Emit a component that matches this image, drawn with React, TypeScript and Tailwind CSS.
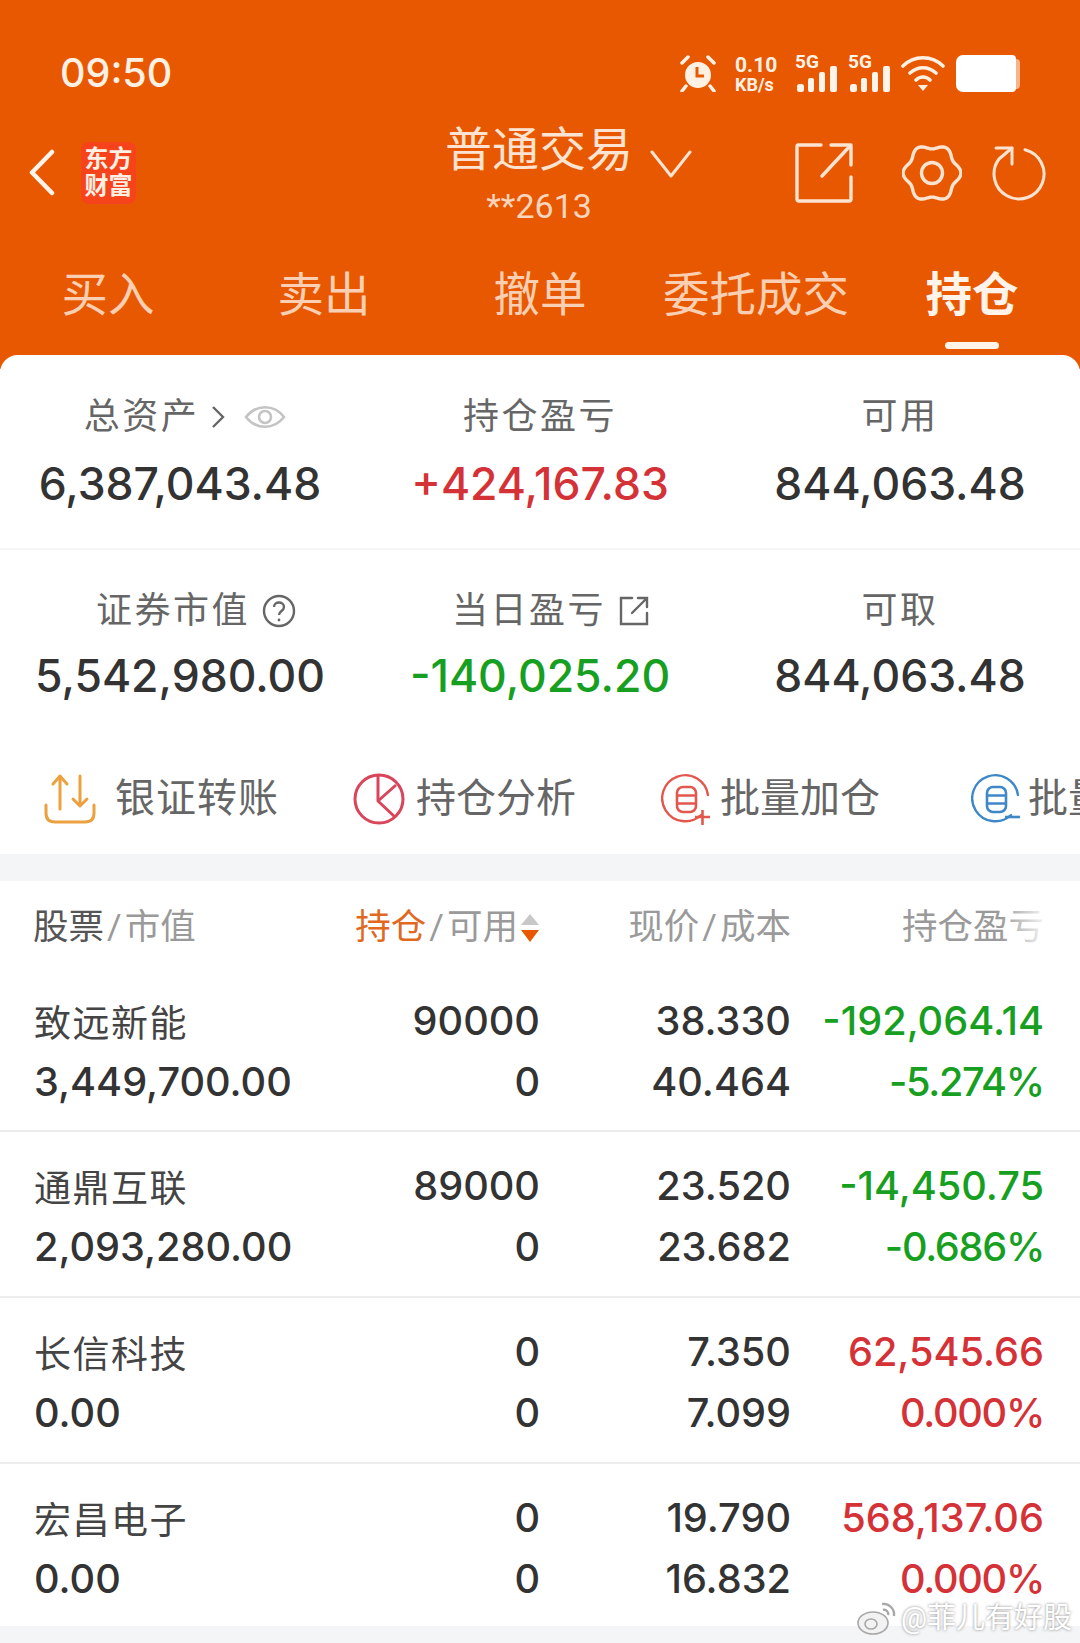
import React from "react";

const RED = "text-[#d53238]";
const GREEN = "text-[#179f22]";

function gearPath() {
  const pts: string[] = [];
  for (let i = 0; i <= 240; i++) {
    const t = (i / 240) * Math.PI * 2;
    const r = 26.5 - 2.4 * Math.cos(6 * t);
    pts.push(`${(30 + r * Math.sin(t)).toFixed(2)} ${(30 - r * Math.cos(t)).toFixed(2)}`);
  }
  return "M" + pts.join("L") + "Z";
}

function Signal() {
  return (
    <div className="relative w-[42px] h-[37px] shrink-0">
      <span className="absolute left-0 top-[-3px] text-[19px] leading-[20px] font-bold text-[#fff3ea]">5G</span>
      <svg viewBox="0 0 42 37" className="absolute inset-0 w-[42px] h-[37px]">
        <rect x="2" y="29" width="7" height="8" rx="2.5" fill="#fff3ea" />
        <rect x="13" y="23" width="6" height="14" rx="2" fill="#fff3ea" />
        <rect x="24" y="17" width="6" height="20" rx="2" fill="#fff3ea" />
        <rect x="35" y="11" width="7" height="26" rx="2" fill="#fff3ea" />
      </svg>
    </div>
  );
}

function DbIcon({ color, sign }: { color: string; sign: "+" | "-" }) {
  return (
    <svg viewBox="0 0 50 52" className="w-[50px] h-[52px] shrink-0" fill="none">
      <path d="M40 42 A23 23 0 1 1 47 22" stroke={color} strokeWidth="2.4" strokeLinecap="round" />
      <g stroke={color} strokeWidth="2.6">
        <rect x="16" y="14" width="19" height="25" rx="6" />
        <path d="M16 22.5h19M16 30.5h19" />
      </g>
      {sign === "+" ? (
        <path d="M34 44h15M41.5 37v15" stroke={color} strokeWidth="2.6" />
      ) : (
        <path d="M34 44h15" stroke={color} strokeWidth="2.6" />
      )}
    </svg>
  );
}

function Stat({ label, value, color, extra, labelCls, valueCls }: { label: string; value: string; color?: string; extra?: React.ReactNode; labelCls: string; valueCls: string }) {
  return (
    <div className="relative flex flex-col items-center">
      <div className={`h-[50px] flex items-center text-[36px] text-[#666] tracking-[2.5px] ${labelCls}`}>
        {label}
        {extra}
      </div>
      <div className={`h-[70px] flex items-center font-['Inter'] text-[44.5px] font-medium ${valueCls} ${color ?? "text-[#333]"}`}>{value}</div>
    </div>
  );
}

const rows = [
  { n: "致远新能", v: "3,449,700.00", a: "90000", b: "0", c: "38.330", d: "40.464", e: "-192,064.14", f: "-5.274%", col: GREEN },
  { n: "通鼎互联", v: "2,093,280.00", a: "89000", b: "0", c: "23.520", d: "23.682", e: "-14,450.75", f: "-0.686%", col: GREEN },
  { n: "长信科技", v: "0.00", a: "0", b: "0", c: "7.350", d: "7.099", e: "62,545.66", f: "0.000%", col: RED },
  { n: "宏昌电子", v: "0.00", a: "0", b: "0", c: "19.790", d: "16.832", e: "568,137.06", f: "0.000%", col: RED },
];

const rowBox = ["h-[159px] pt-[18px] border-b-2", "h-[166px] pt-[24px] border-b-2", "h-[166px] pt-[24px] border-b-2", "h-[162px] pt-[24px]"];

export default function App() {
  return (
    <div className="relative w-[1080px] h-[1643px] overflow-hidden bg-[#f4f5f7] font-['Roboto','Noto_Sans_CJK_SC',sans-serif]">
      {/* Orange header */}
      <div className="h-[369px] bg-[#e85800] text-white">
        {/* status bar */}
        <div className="h-[120px] flex items-center pt-[27px]">
          <div className="ml-[60px] w-[105px] whitespace-nowrap font-['Inter'] text-[39.5px] font-medium text-[#fff0e4]">09:50</div>
          <div className="ml-[515px] flex items-center">
            <svg viewBox="0 0 36 37" className="w-[36px] h-[37px] shrink-0">
              <circle cx="18" cy="20" r="13" fill="#fff0e4" />
              <path d="M17 12v9h7" stroke="#e85800" strokeWidth="3" fill="none" />
              <path d="M2 8 L8 2 M34 8 L28 2 M6 31 L2 36 M30 31 L34 36" stroke="#fff0e4" strokeWidth="3.5" strokeLinecap="round" />
            </svg>
            <div className="ml-[19px] w-[42px] flex flex-col items-start gap-[1px]">
              <span className="text-[21px] leading-[20px] font-bold text-[#fff0e4]">0.10</span>
              <span className="text-[18px] leading-[17px] font-bold text-[#fff0e4]">KB/s</span>
            </div>
            <div className="ml-[18px]"><Signal /></div>
            <div className="ml-[11px]"><Signal /></div>
            <svg viewBox="0 0 44 37" className="ml-[11px] w-[44px] h-[37px] shrink-0" fill="none" stroke="#fff0e4" strokeWidth="3.6" strokeLinecap="round">
              <path d="M2 11 C13 0 31 0 42 11" />
              <path d="M9 18 C17 11 27 11 35 18" />
              <path d="M15 25 C19 21 25 21 29 25" />
              <path d="M17 30 L27 30 L22 36 Z" fill="#fff0e4" stroke="none" />
            </svg>
            <div className="ml-[11px] flex items-center">
              <div className="w-[60px] h-[37px] bg-white rounded-l-[7px] rounded-r-[4px]" />
              <div className="w-[4px] h-[30px] bg-[#f7b48c] rounded-r-[4px]" />
            </div>
          </div>
        </div>
        {/* nav */}
        <div className="h-[105px] flex items-center">
          <svg viewBox="0 0 26 47" className="ml-[29px] w-[26px] h-[47px] shrink-0" fill="none" stroke="#fff3ea" strokeWidth="4.5" strokeLinecap="round" strokeLinejoin="round">
            <path d="M23 3 L3 23.5 L23 44" />
          </svg>
          <div className="ml-[26px] w-[55px] h-[62px] rounded-[8px] bg-[#f6431c] flex flex-col items-center justify-center font-['Liberation_Serif','Noto_Sans_CJK_SC',serif] font-bold text-[24px] leading-[27px] text-[#fff0e4]">
            <span>东方</span>
            <span>财富</span>
          </div>
          <div className="ml-[311px] w-[184px] flex flex-col items-center mt-[3px]">
            <div className="text-[47px] leading-[60px] text-[#fde3d2] whitespace-nowrap">普通交易</div>
            <div className="text-[34px] leading-[44px] text-[#fbd5bd] mt-[4px]">**2613</div>
          </div>
          <svg viewBox="0 0 42 28" className="ml-[19px] -mt-[18px] w-[42px] h-[28px] shrink-0" fill="none" stroke="#fde3d2" strokeWidth="3" strokeLinecap="round" strokeLinejoin="round">
            <path d="M2 2 L21 26 L40 2" />
          </svg>
          <svg viewBox="0 0 58 60" className="ml-[103px] w-[58px] h-[60px] shrink-0" fill="none" stroke="#fde3d2" strokeWidth="3.4" strokeLinecap="round" strokeLinejoin="round">
            <path d="M26 2 H3 Q2 2 2 4 V56 Q2 58 4 58 H54 Q56 58 56 56 V34" />
            <path d="M27 33 L55 3" />
            <path d="M36 2 H56 V22" />
          </svg>
          <svg viewBox="0 0 60 60" className="ml-[49px] w-[60px] h-[60px] shrink-0" fill="none" stroke="#fde3d2" strokeWidth="3.4">
            <path d={gearPath()} strokeLinejoin="round" />
            <circle cx="30" cy="30" r="10.5" />
          </svg>
          <svg viewBox="0 0 54 56" className="ml-[30px] w-[54px] h-[56px] shrink-0" fill="none" stroke="#fde3d2" strokeWidth="3" strokeLinecap="round" strokeLinejoin="round">
            <path d="M33 4.7 A25 25 0 1 1 7 14 L20 3" />
            <path d="M4 3 H20 V19" />
          </svg>
        </div>
        {/* tabs */}
        <div className="grid grid-cols-5 h-[144px] pt-[32px]">
          {["买入", "卖出", "撤单", "委托成交", "持仓"].map((t, i) => (
            <div key={t} className="flex flex-col items-center">
              <div className={`h-[78px] flex items-center text-[46.5px] whitespace-nowrap ${i === 4 ? "font-bold text-[#fff3ea]" : "text-[#fbcfb3]"}`}>{t}</div>
              {i === 4 && <div className="mt-[7px] w-[54px] h-[7px] rounded-full bg-[#fff3ea]" />}
            </div>
          ))}
        </div>
      </div>

      {/* White card */}
      <div className="relative -mt-[14px] bg-white rounded-t-[18px]">
        <div className="h-[195px] border-b-2 border-[#f6f6f6] grid grid-cols-3">
          <Stat
            labelCls="mt-[37px] ml-[10px]"
            valueCls="mt-[7px]"
            label="总资产"
            value="6,387,043.48"
            extra={
              <span className="flex items-center ml-[12px]">
                <svg viewBox="0 0 14 26" className="w-[14px] h-[26px]" fill="none" stroke="#666" strokeWidth="2.4"><path d="M2 3 L12 13 L2 23" /></svg>
                <svg viewBox="0 0 42 28" className="ml-[19px] w-[42px] h-[28px]" fill="none" stroke="#c4c4c4" strokeWidth="2.6"><path d="M2 14 C12 1 30 1 40 14 C30 27 12 27 2 14Z" /><circle cx="21" cy="14" r="6" /></svg>
              </span>
            }
          />
          <Stat labelCls="mt-[37px]" valueCls="mt-[7px]" label="持仓盈亏" value="+424,167.83" color={RED} />
          <Stat labelCls="mt-[37px]" valueCls="mt-[7px]" label="可用" value="844,063.48" />
        </div>
        <div className="grid grid-cols-3">
          <Stat
            labelCls="mt-[36px] ml-[32px]"
            valueCls="mt-[5px]"
            label="证券市值"
            value="5,542,980.00"
            extra={
              <svg viewBox="0 0 34 34" className="ml-[12px] w-[34px] h-[34px]" fill="none" stroke="#666" strokeWidth="2.4">
                <circle cx="17" cy="17" r="15" />
                <path d="M12 13 C12 7 22 7 22 13 C22 17 17 17 17 21" />
                <circle cx="17" cy="26" r="1.4" fill="#666" stroke="none" />
              </svg>
            }
          />
          <Stat
            labelCls="mt-[36px] ml-[22px]"
            valueCls="mt-[5px]"
            label="当日盈亏"
            value="-140,025.20"
            color={GREEN}
            extra={
              <svg viewBox="0 0 32 32" className="ml-[12px] w-[32px] h-[32px]" fill="none" stroke="#666" strokeWidth="2.4" strokeLinecap="round">
                <path d="M14 3 H3 V29 H29 V18" />
                <path d="M14 18 L29 3 M20 3 H29 V12" />
              </svg>
            }
          />
          <Stat labelCls="mt-[36px]" valueCls="mt-[5px]" label="可取" value="844,063.48" />
        </div>

        {/* Action row */}
        <div className="h-[143px] pt-[33px] pl-[44px] flex items-center overflow-hidden text-[40px] leading-none text-[#666] whitespace-nowrap">
          <svg viewBox="0 0 52 52" className="w-[52px] h-[52px] shrink-0" fill="none" stroke="#eba13f" strokeWidth="3" strokeLinecap="round" strokeLinejoin="round">
            <path d="M2 32 V40 Q2 49 11 49 H41 Q50 49 50 40 V32" />
            <path d="M16 36 V3 M9 11 L16 3 L23 11" />
            <path d="M36 3 V33 M29 26 L36 33 L43 26" />
          </svg>
          <span className="ml-[19px] shrink-0 w-[163px] tracking-[1px]">银证转账</span>
          <svg viewBox="0 0 52 52" className="ml-[75px] w-[52px] h-[52px] shrink-0" fill="none" stroke="#d9455a" strokeWidth="3" strokeLinejoin="round">
            <circle cx="26" cy="26" r="24" />
            <path d="M25 3 V28 L42 44" />
            <path d="M25 28 L43 12" />
          </svg>
          <span className="ml-[11px] shrink-0 w-[161px]">持仓分析</span>
          <div className="ml-[84px]"><DbIcon color="#e2584f" sign="+" /></div>
          <span className="ml-[9px] shrink-0 w-[161px]">批量加仓</span>
          <div className="ml-[90px]"><DbIcon color="#3f88c8" sign="-" /></div>
          <span className="ml-[7px] shrink-0">批量减仓</span>
        </div>

        {/* Grey band */}
        <div className="h-[27px] bg-[#f4f5f7]" />

        {/* Table */}
        <div className="relative h-[92px] pt-[2px] flex items-center text-[35.5px] text-[#9a9a9a]">
          <div className="w-[540px] pl-[33px] flex items-center justify-between">
            <span className="flex items-center"><span className="text-[#555]">股票</span><span className="mx-[3px]">/</span>市值</span>
            <span className="flex items-center">
              <span className="text-[#e0691f]">持仓</span>
              <span className="mx-[3px]">/</span>可用
              <svg viewBox="0 0 20 30" className="w-[20px] h-[30px] ml-[2px]">
                <path d="M10 1 L19 12 H1 Z" fill="#c8c8c8" />
                <path d="M10 29 L19 17 H1 Z" fill="#e85800" />
              </svg>
            </span>
          </div>
          <div className="w-[251px] text-right">现价<span className="mx-[3px]">/</span>成本</div>
          <div className="w-[253px] text-right">持仓盈亏</div>
          <div className="absolute left-[1000px] top-0 h-full w-[50px] bg-gradient-to-r from-white/0 to-white" />
        </div>

        {rows.map((r, i) => (
          <div key={r.n} className={`grid grid-cols-[540px_251px_253px] border-[#ececec] ${rowBox[i]} font-['Inter'] font-medium text-[39.7px] leading-[60.5px] text-[#333]`}>
            <div className="pl-[34px] flex justify-between">
              <div>
                <div className="font-['Noto_Sans_CJK_SC'] font-normal text-[37px] tracking-[1.5px] text-[#444]">{r.n}</div>
                <div>{r.v}</div>
              </div>
              <div className="text-right">
                <div>{r.a}</div>
                <div>{r.b}</div>
              </div>
            </div>
            <div className="text-right">
              <div>{r.c}</div>
              <div>{r.d}</div>
            </div>
            <div className={`text-right ${r.col}`}>
              <div>{r.e}</div>
              <div className="tracking-[-1.3px]">{r.f}</div>
            </div>
          </div>
        ))}
      </div>

      {/* Watermark */}
      <div className="absolute left-[857px] top-[1600px] flex items-center text-[29px] leading-[36px] text-white [text-shadow:0_0_3px_rgba(90,90,90,0.75)] whitespace-nowrap">
        <svg viewBox="0 0 40 34" className="w-[40px] h-[34px]" fill="#f2f2f2" stroke="#a8a8a8" strokeWidth="1.6">
          <ellipse cx="16" cy="22" rx="15" ry="11" />
          <ellipse cx="14" cy="23" rx="6" ry="5" fill="none" />
          <path d="M25 3 C32 2 38 8 37 15 M26 9 C29 8 32 11 31 14" fill="none" strokeWidth="2.4" />
        </svg>
        <span className="ml-[4px]">@菲儿有好股</span>
      </div>
    </div>
  );
}
